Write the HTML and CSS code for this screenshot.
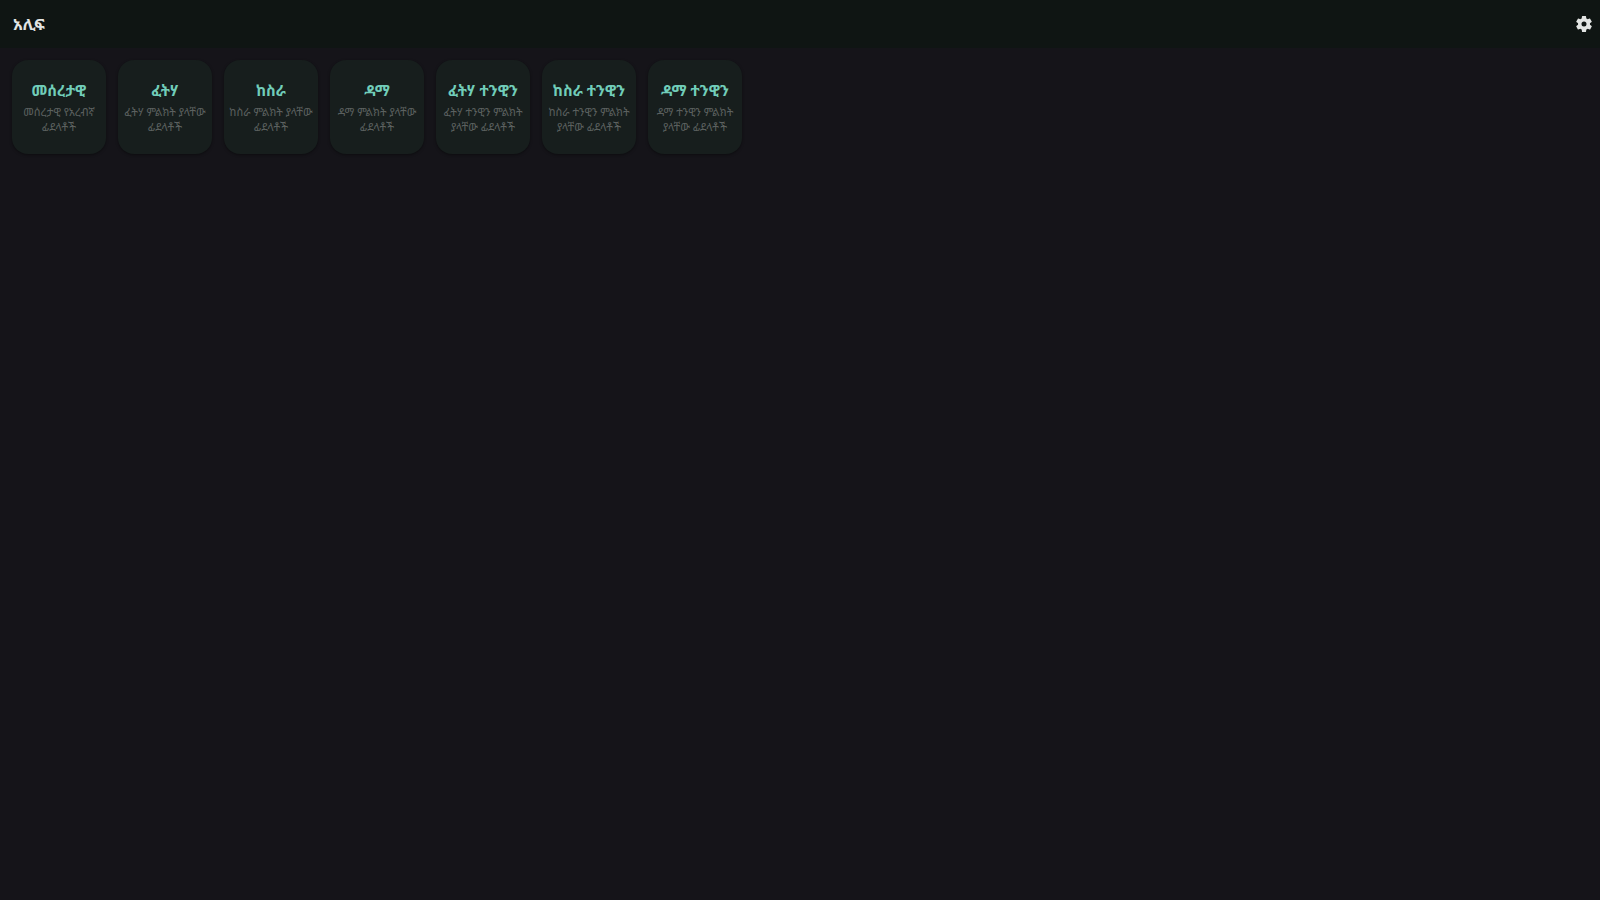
FILE: index.html
```html
<!DOCTYPE html>
<html lang="am">
<head>
<meta charset="utf-8">
<title>አሊፍ</title>
<meta name="viewport" content="width=device-width, initial-scale=1">
<link rel="stylesheet" href="styles.css">
</head>
<body>
    <header class="topbar">
        <h1>አሊፍ</h1>
        <button type="button" class="settings" aria-label="ቅንብሮች">
            <svg viewBox="0 0 24 24" aria-hidden="true"><path d="M19.14 12.94c.04-.3.06-.61.06-.94 0-.32-.02-.64-.07-.94l2.03-1.58a.49.49 0 0 0 .12-.61l-1.92-3.32a.49.49 0 0 0-.59-.22l-2.39.96a7 7 0 0 0-1.62-.94l-.36-2.54a.48.48 0 0 0-.48-.41h-3.84a.48.48 0 0 0-.47.41l-.36 2.54a7.4 7.4 0 0 0-1.62.94l-2.39-.96a.48.48 0 0 0-.59.22L2.74 8.87a.47.47 0 0 0 .12.61l2.03 1.58a6 6 0 0 0 0 1.88l-2.03 1.58a.49.49 0 0 0-.12.61l1.92 3.32c.12.22.37.29.59.22l2.39-.96c.5.38 1.03.7 1.62.94l.36 2.54c.05.24.24.41.48.41h3.84c.24 0 .44-.17.47-.41l.36-2.54a7 7 0 0 0 1.62-.94l2.39.96c.22.08.47 0 .59-.22l1.92-3.32a.47.47 0 0 0-.12-.61zM12 15a3 3 0 1 1 0-6 3 3 0 0 1 0 6z"/></svg>
        </button>
    </header>
    <main class="cards">
        <a class="card" href="#basic">
            <h2>መሰረታዊ</h2>
            <p>መሰረታዊ የአረብኛ ፊደላቶች</p>
        </a>
        <a class="card" href="#fatha">
            <h2>ፈትሃ</h2>
            <p>ፈትሃ ምልክት ያላቸው ፊደላቶች</p>
        </a>
        <a class="card" href="#kasra">
            <h2>ከስራ</h2>
            <p>ከስራ ምልክት ያላቸው ፊደላቶች</p>
        </a>
        <a class="card" href="#damma">
            <h2>ዳማ</h2>
            <p>ዳማ ምልክት ያላቸው ፊደላቶች</p>
        </a>
        <a class="card" href="#fatha-tanween">
            <h2>ፈትሃ ተንዊን</h2>
            <p>ፈትሃ ተንዊን ምልክት ያላቸው ፊደላቶች</p>
        </a>
        <a class="card" href="#kasra-tanween">
            <h2>ከስራ ተንዊን</h2>
            <p>ከስራ ተንዊን ምልክት ያላቸው ፊደላቶች</p>
        </a>
        <a class="card" href="#damma-tanween">
            <h2>ዳማ ተንዊን</h2>
            <p>ዳማ ተንዊን ምልክት ያላቸው ፊደላቶች</p>
        </a>
    </main>
</body>
</html>
```
FILE: styles.css
```css
* {
    box-sizing: border-box;
}
html {
    background: #151419;
    color: #e2e4e3;
    font-family: "Noto Sans Ethiopic", "Noto Sans", sans-serif;
}
body {
    margin: 0;
}
h1,
h2,
p {
    margin: 0;
}
.topbar {
    display: flex;
    align-items: center;
    justify-content: space-between;
    height: 48px;
    padding: 0 6px 0 13px;
    background: #0f1513;
}
.topbar h1 {
    font-size: 16px;
    line-height: 24px;
}
.settings {
    display: flex;
    padding: 0;
    border: 0;
    background: none;
    color: #e2e4e3;
    cursor: pointer;
}
.settings svg {
    width: 20px;
    height: 20px;
    fill: currentColor;
}
.cards {
    display: flex;
    flex-wrap: wrap;
    gap: 12px;
    padding: 12px;
}
.card {
    display: flex;
    flex-direction: column;
    align-items: center;
    gap: 2px;
    width: 94px;
    min-height: 94px;
    padding: 18px 4px;
    border-radius: 16px;
    background: #171e1d;
    box-shadow: 0 1px 3px rgba(0, 0, 0, .4);
    text-align: center;
    text-decoration: none;
}
.card h2 {
    color: #71cdb9;
    font-size: 15px;
    line-height: 24px;
}
.card p {
    color: #5b605f;
    font-size: 11px;
    line-height: 15px;
}
```
